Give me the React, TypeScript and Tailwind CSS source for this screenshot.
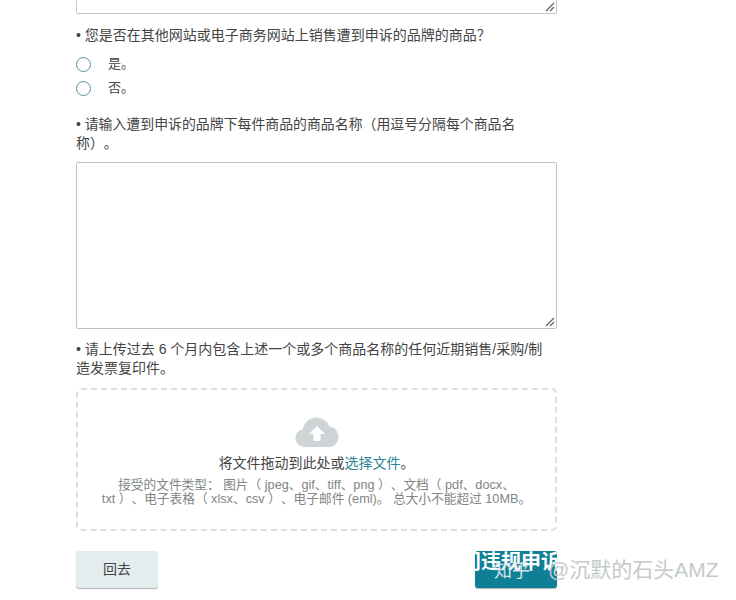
import React from 'react';

const FONT = "font-['Liberation_Sans','Noto_Sans_CJK_SC',sans-serif]";

const Grip = () => (
  <svg className="absolute right-[1px] bottom-[1px] h-[11px] w-[11px] text-[#666]" viewBox="0 0 11 11" fill="none" stroke="currentColor" strokeWidth="1.3">
    <line x1="2" y1="10" x2="10" y2="2" />
    <line x1="6" y1="10" x2="10" y2="6" />
  </svg>
);

const Radio = ({ label }: { label: string }) => (
  <div className="flex h-[24px] items-center">
    <span className="h-[15px] w-[15px] rounded-full border border-[#5f8f9c] bg-white" />
    <span className="ml-[17px] text-[13px] text-[#444]">{label}</span>
  </div>
);

const CloudUpload = () => (
  <svg className="h-[30px] w-[44px]" viewBox="0 0 44 30">
    <path
      fill="#cfd5d6"
      d="M10 30C4.500 30 0.500 26 0.500 21C0.500 16.500 3.500 13 8 12.300C9 5.500 14.500 0.500 21.500 0.500C27.500 0.500 32.500 4 34.300 9.500C39.800 10 43.500 14.500 43.500 20C43.500 25.500 39.500 30 34 30Z"
    />
    <path fill="#ffffff" d="M22 9L30 17H25.500V24H18.500V17H14Z" />
  </svg>
);

export default function App() {
  return (
    <div className={`${FONT} relative h-[600px] w-[736px] overflow-hidden bg-white [text-spacing-trim:space-all]`}>
      <div className="ml-[76px] flex w-[481px] flex-col">
        <div className="relative h-[14px] w-full rounded-b-[2px] border border-t-0 border-[#c4c7c7]">
          <Grip />
        </div>

        <p className="mt-[11px] h-[20px] text-[14px] leading-[20px] text-[#444]">
          • 您是否在其他网站或电子商务网站上销售遭到申诉的品牌的商品？
        </p>

        <div className="mt-[7px] flex flex-col">
          <Radio label="是。" />
          <Radio label="否。" />
        </div>

        <p className="mt-[15px] w-[450px] text-[13.9px] leading-[19px] text-[#444]">
          • 请输入遭到申诉的品牌下每件商品的商品名称（用逗号分隔每个商品名称）。
        </p>

        <div className="relative mt-[9px] h-[167px] w-full rounded-[2px] border border-[#c0c3c3]">
          <Grip />
        </div>

        <p className="mt-[11px] w-[475px] text-[14px] leading-[19px] text-[#444]">
          • 请上传过去 6 个月内包含上述一个或多个商品名称的任何近期销售/采购/制造发票复印件。
        </p>

        <div className="mt-[10px] flex h-[143px] w-full flex-col items-center rounded-[5px] border-2 border-dashed border-[#dcdfdf] pt-[27px]">
          <CloudUpload />
          <p className="mt-[8px] text-[14px] leading-[16px] text-[#444]">
            将文件拖动到此处或<span className="text-[#2a8494]">选择文件</span>。
          </p>
          <p className="mt-[7px] text-center text-[12.7px] leading-[14px] text-[#808585]">
            接受的文件类型： 图片（ jpeg、gif、tiff、png ）、文档（ pdf、docx、
            <br />
            txt ）、电子表格（ xlsx、csv ）、电子邮件 (eml)。 总大小不能超过 10MB。
          </p>
        </div>

        <div className="mt-[20px] flex items-start justify-between">
          <button className="h-[37px] w-[82px] rounded-[3px] bg-[#e3ecef] text-[14px] text-[#444] shadow-[0_1px_1px_rgba(0,0,0,0.3)]">
            回去
          </button>
          <button className="relative h-[37px] w-[82px] overflow-hidden rounded-[3px] bg-[#0f7f96] shadow-[0_1px_1px_rgba(0,0,0,0.3)]">
            <span className="absolute left-[-14px] top-[-1px] whitespace-nowrap text-[20px] font-bold leading-[24px] text-white">
              门违规申诉
            </span>
            <span className="absolute left-[19px] top-[9px] text-[18px] leading-[22px] text-[#d5e4e8]">知乎</span>
          </button>
        </div>
      </div>

      {/* 水印 */}
      <span className="absolute left-[548px] top-[558px] whitespace-nowrap text-[21px] leading-[24px] text-[#c4cacc]">
        @沉默的石头AMZ
      </span>
    </div>
  );
}
